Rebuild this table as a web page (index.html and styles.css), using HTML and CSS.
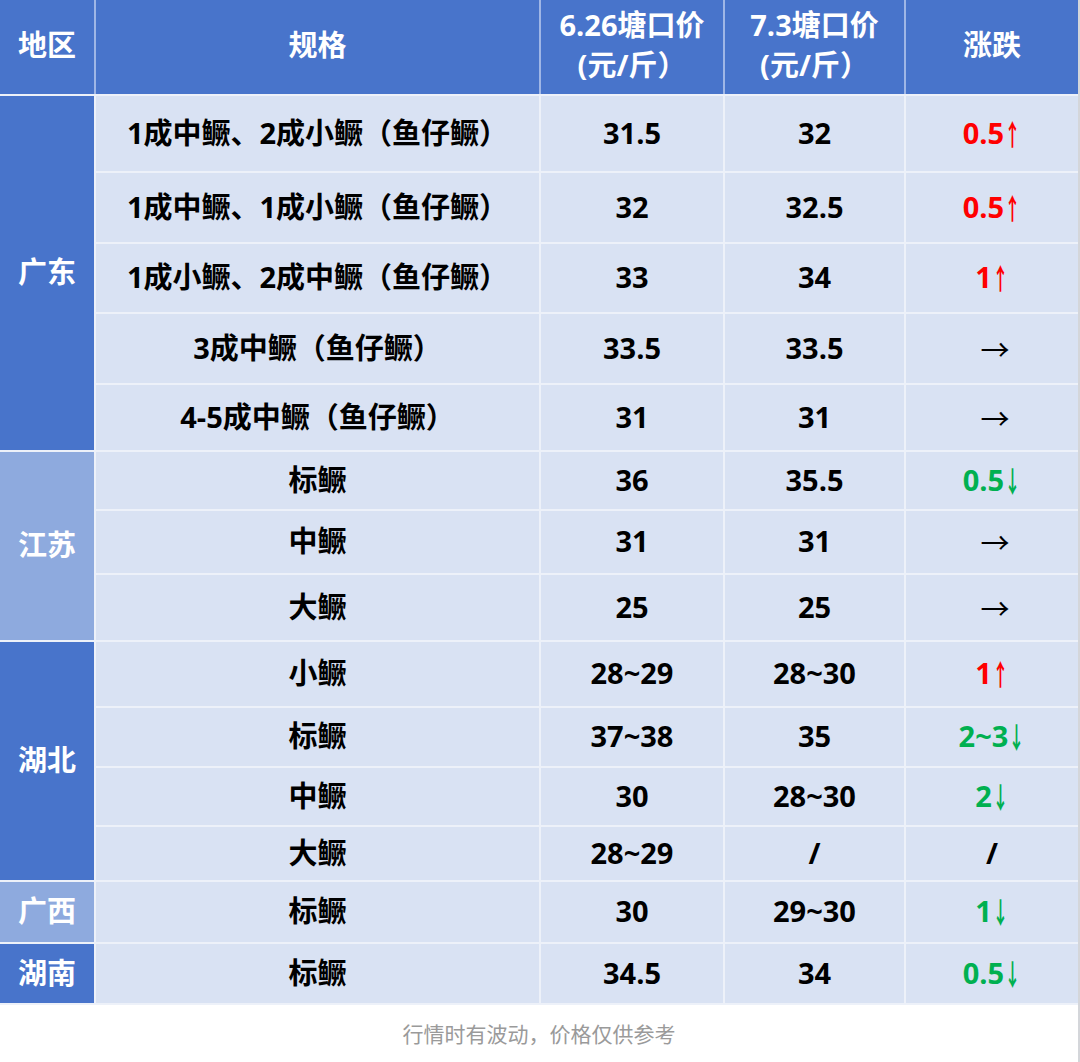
FILE: index.html
```html
<!DOCTYPE html>
<html lang="zh-CN">
<head>
<meta charset="utf-8">
<title>鳜鱼塘口价</title>
<link rel="stylesheet" href="styles.css">
</head>
<body>
<div class="page">
  <div class="grid">
    <div class="cell head">地区</div>
    <div class="cell head">规格</div>
    <div class="cell head two">6.26塘口价<br>(元/斤）</div>
    <div class="cell head two">7.3塘口价<br>(元/斤）</div>
    <div class="cell head last">涨跌</div>

    <div class="cell region dark span5">广东</div>
    <div class="cell">1成中鳜、2成小鳜（鱼仔鳜）</div>
    <div class="cell">31.5</div>
    <div class="cell">32</div>
    <div class="cell up">0.5<span class="arr">↑</span></div>

    <div class="cell">1成中鳜、1成小鳜（鱼仔鳜）</div>
    <div class="cell">32</div>
    <div class="cell">32.5</div>
    <div class="cell up">0.5<span class="arr">↑</span></div>

    <div class="cell">1成小鳜、2成中鳜（鱼仔鳜）</div>
    <div class="cell">33</div>
    <div class="cell">34</div>
    <div class="cell up">1<span class="arr">↑</span></div>

    <div class="cell">3成中鳜（鱼仔鳜）</div>
    <div class="cell">33.5</div>
    <div class="cell">33.5</div>
    <div class="cell"><span class="flat">→</span></div>

    <div class="cell">4-5成中鳜（鱼仔鳜）</div>
    <div class="cell">31</div>
    <div class="cell">31</div>
    <div class="cell"><span class="flat">→</span></div>

    <div class="cell region light span3">江苏</div>
    <div class="cell">标鳜</div>
    <div class="cell">36</div>
    <div class="cell">35.5</div>
    <div class="cell down">0.5<span class="arr">↓</span></div>

    <div class="cell">中鳜</div>
    <div class="cell">31</div>
    <div class="cell">31</div>
    <div class="cell"><span class="flat">→</span></div>

    <div class="cell">大鳜</div>
    <div class="cell">25</div>
    <div class="cell">25</div>
    <div class="cell"><span class="flat">→</span></div>

    <div class="cell region dark span4">湖北</div>
    <div class="cell">小鳜</div>
    <div class="cell">28~29</div>
    <div class="cell">28~30</div>
    <div class="cell up">1<span class="arr">↑</span></div>

    <div class="cell">标鳜</div>
    <div class="cell">37~38</div>
    <div class="cell">35</div>
    <div class="cell down">2~3<span class="arr">↓</span></div>

    <div class="cell">中鳜</div>
    <div class="cell">30</div>
    <div class="cell">28~30</div>
    <div class="cell down">2<span class="arr">↓</span></div>

    <div class="cell">大鳜</div>
    <div class="cell">28~29</div>
    <div class="cell">/</div>
    <div class="cell">/</div>

    <div class="cell region light">广西</div>
    <div class="cell">标鳜</div>
    <div class="cell">30</div>
    <div class="cell">29~30</div>
    <div class="cell down">1<span class="arr">↓</span></div>

    <div class="cell region dark">湖南</div>
    <div class="cell">标鳜</div>
    <div class="cell">34.5</div>
    <div class="cell">34</div>
    <div class="cell down">0.5<span class="arr">↓</span></div>
  </div>
  <div class="footer">行情时有波动，价格仅供参考</div>
</div>
</body>
</html>
```

FILE: styles.css
```css
html, body {
  margin: 0;
  padding: 0;
  background: #ffffff;
}

.page {
  width: 1078px;
  height: 1062px;
  border-right: 2px solid #d4d6da;
  display: flex;
  flex-direction: column;
  font-family: "Open Sans", "Noto Sans CJK SC", sans-serif;
}

.grid {
  display: grid;
  grid-template-columns: 94px 443px 182px 179px 172px;
  grid-template-rows: 94px 75px 69px 68px 69px 65px 57px 62px 65px 64px 58px 57px 53px 60px 59px;
  gap: 2px;
  background: #edf1f9;
  padding-bottom: 2px;
}

.cell {
  display: flex;
  align-items: center;
  justify-content: center;
  text-align: center;
  background: #d9e2f3;
  color: #000000;
  font-size: 29px;
  font-weight: 700;
  line-height: 40px;
  padding-bottom: 2px;
}

.head {
  background: #4874cb;
  color: #ffffff;
  box-shadow: 2px 0 0 #9fb6e6;
  padding-bottom: 4px;
}

.head.last {
  box-shadow: none;
}

.region {
  color: #ffffff;
}

.region.dark {
  background: #4874cb;
}

.region.light {
  background: #8eaade;
}

.span5 { grid-row: span 5; }
.span4 { grid-row: span 4; }
.span3 { grid-row: span 3; }

.up { color: #ff0000; }
.down { color: #00b050; }

.arr {
  display: inline-block;
  font-family: "Noto Sans CJK SC", sans-serif;
  font-weight: 700;
  transform: scaleX(0.55);
  margin: 0 -6px 0 -6px;
}

.flat {
  font-family: "Noto Sans CJK SC", sans-serif;
  font-weight: 400;
  margin-left: 6px;
}

.footer {
  flex: 1;
  display: flex;
  align-items: center;
  justify-content: center;
  font-family: "Noto Sans CJK SC", sans-serif;
  font-size: 21px;
  color: #9a9a9a;
  padding-bottom: 2px;
}
```
